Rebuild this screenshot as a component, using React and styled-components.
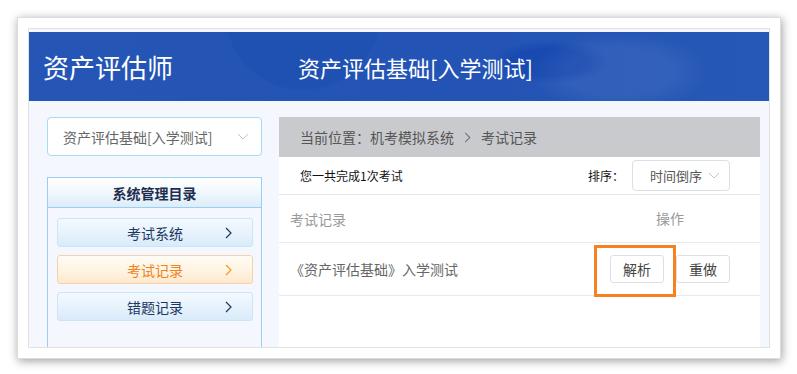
import React from "react"
import styled, { createGlobalStyle } from "styled-components"

const GlobalStyle = createGlobalStyle`
  html, body {
    margin: 0;
    padding: 0;
    background: #ffffff;
  }
  body {
    font-family: "Noto Sans CJK SC", "Noto Sans", sans-serif;
    width: 797px;
    height: 374px;
    overflow: hidden;
  }
`

const menuItems = [
  { label: "考试系统", active: false },
  { label: "考试记录", active: true },
  { label: "错题记录", active: false },
]

const Chevron = ({ color = "#1b3660", w = 7, h = 12, dir = "right" }) => (
  <svg width={w} height={h} viewBox={dir === "right" ? "0 0 7 12" : "0 0 12 7"} fill="none">
    {dir === "right" ? (
      <polyline points="1,1 6,6 1,11" stroke={color} strokeWidth="1.2" />
    ) : (
      <polyline points="1,1 6,6 11,1" stroke={color} strokeWidth="1" />
    )}
  </svg>
)

const App = () => {
  return (
    <>
      <GlobalStyle />
      <Page>
        <Frame>
          <Inner>
            <Header>
              <SiteTitle>资产评估师</SiteTitle>
              <CourseTitle>资产评估基础[入学测试]</CourseTitle>
            </Header>
            <Body>
              <Sidebar>
                <CourseSelect>
                  <span>资产评估基础[入学测试]</span>
                  <Chevron dir="down" color="#c4c4c4" w={12} h={7} />
                </CourseSelect>
                <Menu>
                  <MenuTitle>系统管理目录</MenuTitle>
                  <MenuList>
                    {menuItems.map((item) => (
                      <MenuItem key={item.label} $active={item.active}>
                        <span>{item.label}</span>
                        <ItemArrow>
                          <Chevron color={item.active ? "#f39a1e" : "#1b3660"} />
                        </ItemArrow>
                      </MenuItem>
                    ))}
                  </MenuList>
                </Menu>
              </Sidebar>
              <Main>
                <Breadcrumb>
                  <span>当前位置：机考模拟系统</span>
                  <Chevron color="#777" w={7} h={11} />
                  <span>考试记录</span>
                </Breadcrumb>
                <Content>
                  <Toolbar>
                    <Summary>您一共完成1次考试</Summary>
                    <SortGroup>
                      <SortLabel>排序：</SortLabel>
                      <SortSelect>
                        <span>时间倒序</span>
                        <Chevron dir="down" color="#c0c4cc" w={12} h={7} />
                      </SortSelect>
                    </SortGroup>
                  </Toolbar>
                  <TableRow $head>
                    <Cell $head>考试记录</Cell>
                    <OpsCell $head>操作</OpsCell>
                  </TableRow>
                  <TableRow>
                    <Cell>《资产评估基础》入学测试</Cell>
                    <OpsCell>
                      <Marked>
                        <ActionButton>解析</ActionButton>
                        <Highlight />
                      </Marked>
                      <ActionButton>重做</ActionButton>
                    </OpsCell>
                  </TableRow>
                </Content>
              </Main>
            </Body>
          </Inner>
        </Frame>
      </Page>
    </>
  )
}

export default App

const Page = styled.div`
  padding: 17px 0 0 17px;
`

const Frame = styled.div`
  width: 742px;
  height: 320px;
  padding: 10px;
  background: #ffffff;
  border: 1px solid #dcdcdc;
  box-shadow: 1px 2px 9px rgba(0, 0, 0, 0.38);
`

const Inner = styled.div`
  height: 315px;
  border: 1px solid #e2e2e2;
  padding-top: 3px;
  background: #f4f7fd;
  display: flex;
  flex-direction: column;
`

const Header = styled.div`
  height: 69px;
  flex-shrink: 0;
  display: flex;
  align-items: center;
  padding-left: 14px;
  color: #ffffff;
  background:
    radial-gradient(circle at 274px -20px, #1f51b3 0 77px, rgba(31, 81, 179, 0) 79px),
    radial-gradient(ellipse 90px 40px at 590px 40px, rgba(255, 255, 255, 0.06) 0 60%, rgba(255, 255, 255, 0) 100%),
    radial-gradient(ellipse 60px 22px at 520px 30px, rgba(10, 60, 170, 0.45) 0 60%, rgba(10, 60, 170, 0) 100%),
    linear-gradient(90deg, #2556b6 0%, #2354b5 60%, #2658b7 100%);
`

const SiteTitle = styled.div`
  width: 255px;
  font-size: 26px;
`

const CourseTitle = styled.div`
  font-size: 22px;
`

const Body = styled.div`
  flex: 1;
  display: flex;
  gap: 17px;
  padding: 16px 9px 0 18px;
`

const Sidebar = styled.div`
  width: 215px;
  display: flex;
  flex-direction: column;
  gap: 21px;
`

const CourseSelect = styled.div`
  height: 37px;
  border: 1px solid #a9d9f5;
  border-radius: 4px;
  background: #ffffff;
  display: flex;
  align-items: center;
  justify-content: space-between;
  padding: 0 12px 0 15px;
  font-size: 14px;
  color: #666;
`

const Menu = styled.div`
  flex: 1;
  border: 1px solid #9ccfef;
  border-bottom: none;
  background: #f4f8fe;
  display: flex;
  flex-direction: column;
`

const MenuTitle = styled.div`
  height: 29px;
  border-bottom: 1px solid #9ccfef;
  background: linear-gradient(180deg, #ffffff 0%, #f2f8fd 45%, #dcedfa 100%);
  display: flex;
  align-items: center;
  justify-content: center;
  font-size: 14px;
  font-weight: bold;
  color: #1e2d4c;
`

const MenuList = styled.div`
  display: flex;
  flex-direction: column;
  gap: 8px;
  padding: 10px 8px 0 9px;
`

const MenuItem = styled.div`
  position: relative;
  height: 27px;
  border: 1px solid ${(p) => (p.$active ? "#f4d2ad" : "#cbe4f6")};
  border-radius: 3px;
  background: ${(p) =>
    p.$active
      ? "linear-gradient(180deg, #fffcf6 0%, #fff3e2 55%, #fde8cc 100%)"
      : "linear-gradient(180deg, #f3f9fe 0%, #e6f2fc 55%, #d8ebfa 100%)"};
  display: flex;
  align-items: center;
  justify-content: center;
  font-size: 14px;
  color: ${(p) => (p.$active ? "#ec8419" : "#1b3660")};
`

const ItemArrow = styled.span`
  position: absolute;
  right: 20px;
  top: 8px;
  display: flex;
`

const Main = styled.div`
  flex: 1;
  display: flex;
  flex-direction: column;
`

const Breadcrumb = styled.div`
  height: 40px;
  flex-shrink: 0;
  background: #c9cacd;
  display: flex;
  align-items: center;
  gap: 10px;
  padding-left: 21px;
  font-size: 14px;
  color: #555;
`

const Content = styled.div`
  flex: 1;
  background: #ffffff;
`

const Toolbar = styled.div`
  height: 37px;
  border-bottom: 1px solid #e4e6eb;
  display: flex;
  align-items: center;
  justify-content: space-between;
  padding: 0 30px 0 21px;
`

const Summary = styled.span`
  font-size: 12px;
  color: #111;
`

const SortGroup = styled.div`
  display: flex;
  align-items: center;
  gap: 8px;
`

const SortLabel = styled.span`
  font-size: 12px;
  color: #111;
`

const SortSelect = styled.div`
  width: 98px;
  height: 31px;
  box-sizing: border-box;
  border: 1px solid #dcdfe6;
  border-radius: 4px;
  display: flex;
  align-items: center;
  justify-content: space-between;
  padding: 0 9px 0 17px;
  font-size: 13px;
  color: #555;
`

const TableRow = styled.div`
  height: ${(p) => (p.$head ? "47px" : "52px")};
  border-bottom: 1px solid #e8eaf0;
  display: flex;
  align-items: center;
  justify-content: space-between;
  padding: 0 30px 0 11px;
`

const Cell = styled.span`
  font-size: 14px;
  color: ${(p) => (p.$head ? "#999" : "#666")};
`

const OpsCell = styled.div`
  width: 120px;
  display: flex;
  justify-content: ${(p) => (p.$head ? "center" : "space-between")};
  font-size: 14px;
  color: #999;
  margin-top: ${(p) => (p.$head ? "-2px" : "0")};
`

const Marked = styled.div`
  position: relative;
`

const ActionButton = styled.div`
  width: 54px;
  height: 28px;
  box-sizing: border-box;
  border: 1px solid #dcdfe6;
  border-radius: 3px;
  background: #ffffff;
  display: flex;
  align-items: center;
  justify-content: center;
  font-size: 14px;
  color: #444;
`

const Highlight = styled.div`
  position: absolute;
  left: -16px;
  top: -10px;
  width: 82px;
  height: 52px;
  box-sizing: border-box;
  border: 3px solid #f58220;
`
